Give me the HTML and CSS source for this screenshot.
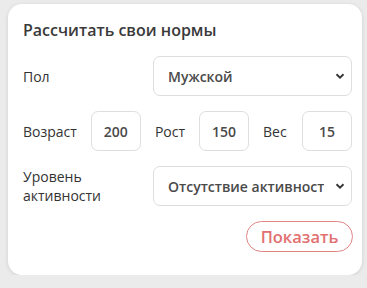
FILE: index.html
```html
<!DOCTYPE html>
<html lang="ru">
<head>
<meta charset="utf-8">
<link rel="stylesheet" href="styles.css">
</head>
<body>
<div class="card">
  <div class="title">Рассчитать свои нормы</div>
  <div class="row">
    <label class="label">Пол</label>
    <div class="select-wrap">
      <select class="select"><option>Мужской</option></select>
      <svg class="chev" width="10" height="6" viewBox="0 0 10 6"><path d="M1.5 1.3 L5 4.6 L8.5 1.3" fill="none" stroke="#333" stroke-width="1.9"/></svg>
    </div>
  </div>
  <div class="row nums">
    <label class="label">Возраст</label>
    <input class="num" value="200">
    <label class="label">Рост</label>
    <input class="num" value="150">
    <label class="label">Вес</label>
    <input class="num" value="15">
  </div>
  <div class="row">
    <label class="label two">Уровень<br>активности</label>
    <div class="select-wrap">
      <select class="select"><option>Отсутствие активности</option></select>
      <svg class="chev" width="10" height="6" viewBox="0 0 10 6"><path d="M1.5 1.3 L5 4.6 L8.5 1.3" fill="none" stroke="#333" stroke-width="1.9"/></svg>
    </div>
  </div>
  <div class="actions">
    <button class="btn">Показать</button>
  </div>
</div>
</body>
</html>
```
FILE: styles.css
```css
html, body { margin: 0; padding: 0; }
body {
  background: #ebebeb;
  font-family: "Open Sans", "Noto Sans", sans-serif;
  color: #333;
  padding: 4px 5px 0 8px;
  width: 354px;
}
.card {
  background: #fff;
  border-radius: 14px;
  box-shadow: 0 1px 4px rgba(0,0,0,0.12);
  padding: 16px 10px 23px 15px;
  height: 271px;
  box-sizing: border-box;
}
.title {
  font-size: 16px;
  font-weight: 600;
  line-height: 20px;
  color: #3a3a3a;
  margin-bottom: 16px;
}
.row {
  display: flex;
  align-items: center;
  margin-bottom: 15px;
}
.row:first-of-type { margin-bottom: 16px; }
.label {
  font-size: 14px;
  line-height: 19px;
  color: #333;
  width: 130px;
  flex: none;
}
.nums .label { width: auto; }
.nums { gap: 14px; margin-bottom: 15px; }
.select-wrap {
  position: relative;
  flex: 1;
}
.select {
  appearance: none;
  -webkit-appearance: none;
  width: 100%;
  height: 40px;
  box-sizing: border-box;
  border: 1px solid #dedede;
  border-radius: 7px;
  background: #fff;
  font-family: "Open Sans", "Noto Sans", sans-serif;
  font-size: 14px;
  font-weight: 600;
  color: #4a4a4a;
  padding: 0 27px 0 14px;
  outline: none;
  display: block;
}
.chev {
  position: absolute;
  right: 7px;
  top: 17px;
  pointer-events: none;
}
.num {
  width: 50px;
  height: 40px;
  box-sizing: border-box;
  border: 1px solid #dedede;
  border-radius: 7px;
  text-align: center;
  font-family: "Open Sans", "Noto Sans", sans-serif;
  font-size: 14px;
  font-weight: 600;
  color: #4a4a4a;
  padding: 0;
  outline: none;
  flex: none;
}
.nums .num:last-child { margin-left: auto; }
.actions {
  display: flex;
  justify-content: flex-end;
}
.btn {
  width: 107px;
  height: 31px;
  margin-right: -1px;
  border: 1px solid #e08585;
  border-radius: 16px;
  background: #fff;
  color: #e27070;
  font-family: "Open Sans", "Noto Sans", sans-serif;
  font-size: 16.5px;
  font-weight: 600;
  padding: 0;
}
```
